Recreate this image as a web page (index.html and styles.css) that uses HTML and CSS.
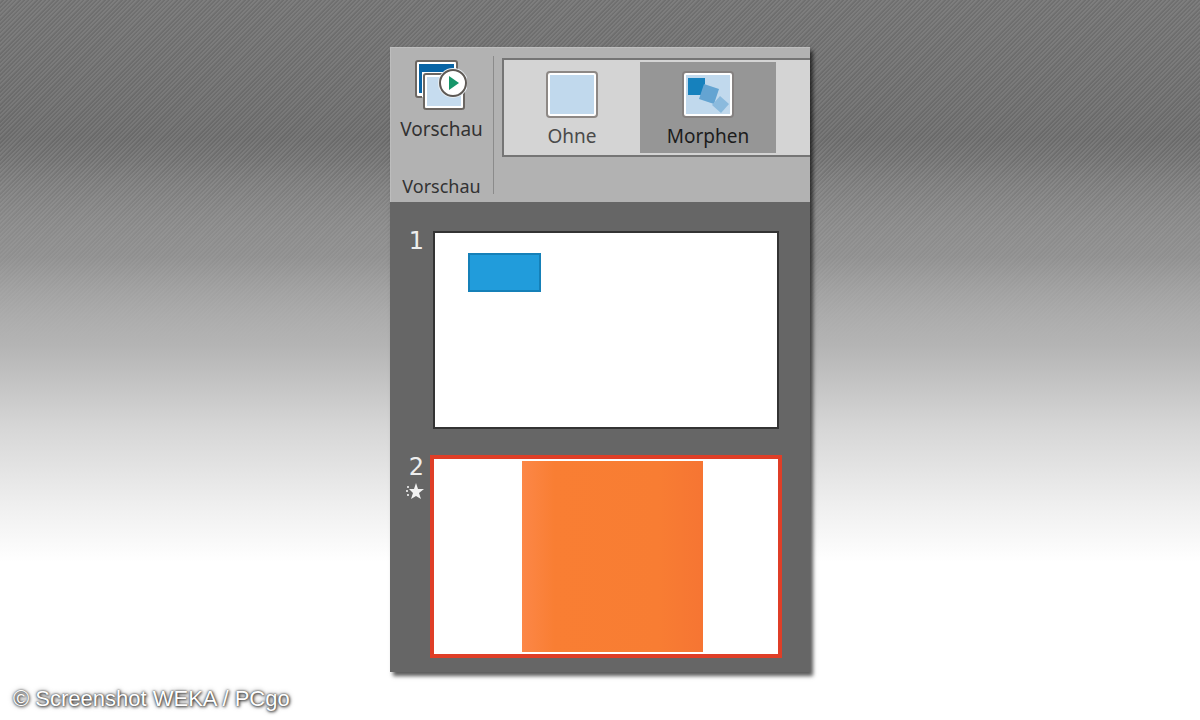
FILE: index.html
```html
<!DOCTYPE html>
<html lang="de">
<head>
<meta charset="utf-8">
<meta name="viewport" content="width=device-width, initial-scale=1">
<title>Übergang Morphen</title>
<link rel="stylesheet" href="styles.css">
</head>
<body>
<main class="stage">
  <section class="panel">
    <header class="ribbon">
      <div class="group">
        <button class="preview" type="button">
          <svg class="preview-icon" width="52" height="52" viewBox="0 0 52 52" aria-hidden="true">
            <rect x="1" y="1" width="41" height="36" rx="2" fill="#fff" stroke="#6b6662" stroke-width="2"/>
            <rect x="4" y="4" width="35" height="29" fill="#0864a5"/>
            <rect x="7" y="12" width="41" height="38" fill="#fff"/>
            <path d="M7 37h3v13H7z" fill="#b2b2b2"/>
            <rect x="9" y="14" width="40" height="35" rx="2" fill="#fff" stroke="#6b6662" stroke-width="2"/>
            <rect x="12" y="17" width="34" height="29" fill="#c6dcef"/>
            <circle cx="38" cy="23" r="15" fill="#e8eef3"/>
            <circle cx="38" cy="23" r="13" fill="#fff" stroke="#5e5955" stroke-width="2"/>
            <path d="M34 16v14l10-7z" fill="#16966a"/>
          </svg>
          <span>Vorschau</span>
        </button>
        <span class="group-name">Vorschau</span>
      </div>
      <div class="gallery">
        <button class="effect" type="button">
          <svg width="52" height="47" viewBox="0 0 52 47" aria-hidden="true">
            <rect x="1" y="1" width="50" height="45" rx="3" fill="#fff" stroke="#8d8885" stroke-width="2"/>
            <rect x="4" y="4" width="44" height="39" fill="#c1d9ed"/>
          </svg>
          <span>Ohne</span>
        </button>
        <button class="effect effect-active" type="button" aria-pressed="true">
          <svg width="52" height="47" viewBox="0 0 52 47" aria-hidden="true">
            <rect x="1" y="1" width="50" height="45" rx="3" fill="#fff" stroke="#858180" stroke-width="2"/>
            <rect x="4" y="4" width="44" height="39" fill="#c1d9ed"/>
            <rect x="6" y="7" width="17" height="17" fill="#1681bd"/>
            <path d="M22 13l15 5-5 15-15-5z" fill="#64a4d2"/>
            <path d="M38 25l9 8-8 9-9-8z" fill="#8bbadd"/>
          </svg>
          <span>Morphen</span>
        </button>
      </div>
    </header>
    <ol class="slides">
      <li class="slide-row">
        <div class="marker"><span>1</span></div>
        <div class="slide slide-first"><div class="shape-blue"></div></div>
      </li>
      <li class="slide-row">
        <div class="marker">
          <span>2</span>
          <svg width="18" height="17" viewBox="0 0 18 17" aria-hidden="true">
            <path d="M10 0l2 6h6l-5 4 2 6-5-3-5 3 2-6-4-4h5z" fill="#f2f2f2"/>
            <path d="M1 3h2v2H1zM0 7h2v2H0zM1 11h2v2H1z" fill="#d5d5d5"/>
          </svg>
        </div>
        <div class="slide slide-selected"><div class="shape-orange"></div></div>
      </li>
    </ol>
  </section>
  <footer class="credit">© Screenshot WEKA / PCgo</footer>
</main>
</body>
</html>
```
FILE: styles.css
```css
* {
  box-sizing: border-box;
}

body {
  margin: 0;
  font-family: "Noto Sans", "Open Sans", sans-serif;
  background: #fff;
}

/* Fine diagonal hatching that fades out as the grey turns to white. */
.stage {
  min-height: 100vh;
  padding-top: 47px;
  display: flex;
  flex-direction: column;
  align-items: center;
  background:
    linear-gradient(rgba(118, 118, 118, 0) 160px, rgba(147, 147, 147, 0.6) 257px, #b4b4b4 345px, #d6d6d6 427px, #efefef 505px, #fff 562px),
    repeating-linear-gradient(135deg, rgba(255, 255, 255, 0.06) 0 1px, rgba(0, 0, 0, 0.06) 2px 3px),
    linear-gradient(#767676 0, #707070 138px, #7b7b7b 174px, #939393 257px, #b4b4b4 345px, #fff 562px);
}

.panel {
  width: 35%;
  min-width: 400px;
  background: #666;
  box-shadow: 3px 4px 4px rgba(0, 0, 0, 0.65);
}

.ribbon {
  display: flex;
  padding-top: 8px;
  padding-bottom: 8px;
  background: #b2b2b2;
  border-left: 1px solid #bdbdbd;
  border-top: 1px solid #bdbdbd;
}

button {
  margin: 0;
  padding: 0;
  border: 0;
  background: none;
  font: inherit;
  color: inherit;
  display: flex;
  flex-direction: column;
  align-items: center;
}

.group {
  flex: 0 0 103px;
  display: flex;
  flex-direction: column;
  justify-content: space-between;
  align-items: center;
  padding: 4px 1px 0 0;
  border-right: 1px solid #8b8b8b;
  font-size: 19px;
  line-height: 20px;
  color: #333;
}

.preview {
  gap: 7px;
}

.group-name {
  font-size: 18px;
  line-height: 16px;
}

.gallery {
  flex: 1;
  display: flex;
  height: 99px;
  margin: 2px 0 37px 8px;
  padding: 2px 0;
  background: #d4d4d4;
  border: 2px solid #757575;
  border-right: 0;
  overflow: hidden;
}

.effect {
  flex: 0 0 136px;
  padding-top: 9px;
  gap: 8px;
  font-size: 19px;
  line-height: 20px;
  color: #4a4a4a;
}

.effect-active {
  background: #969696;
  color: #1c1c1c;
}

.slides {
  margin: 0;
  padding: 27px 28px 14px 0;
  list-style: none;
  display: flex;
  flex-direction: column;
  gap: 25px;
}

.slide-row {
  display: flex;
}

.marker {
  flex: 0 0 40px;
  display: flex;
  flex-direction: column;
  align-items: flex-end;
  padding-right: 6px;
  gap: 4px;
  font-family: "DejaVu Sans", sans-serif;
  font-size: 24px;
  line-height: 24px;
  color: #eee;
}

.slide {
  flex: 1;
  background: #fff;
}

.slide-first {
  height: 198px;
  margin: 2px 3px 1px;
  padding: 20px 33px;
  border: 2px solid #333;
}

.shape-blue {
  width: 73px;
  height: 39px;
  background: #219cdb;
  border: 2px solid #1580b8;
}

.slide-selected {
  height: 203px;
  padding: 2px 0 2px 13px;
  display: flex;
  justify-content: center;
  border: 4px solid #df3e27;
}

.shape-orange {
  width: 181px;
  background: linear-gradient(90deg, #fc8747, #f97e33 18%, #f87d33 75%, #f67533);
}

.credit {
  align-self: flex-start;
  margin-top: 13px;
  padding: 0 13px;
  font-family: "Liberation Sans", Arial, sans-serif;
  font-size: 22px;
  line-height: 28px;
  color: #fff;
  text-shadow: 0 0 2px #333, 1px 1px 3px #444, 0 0 5px #777;
}
```
